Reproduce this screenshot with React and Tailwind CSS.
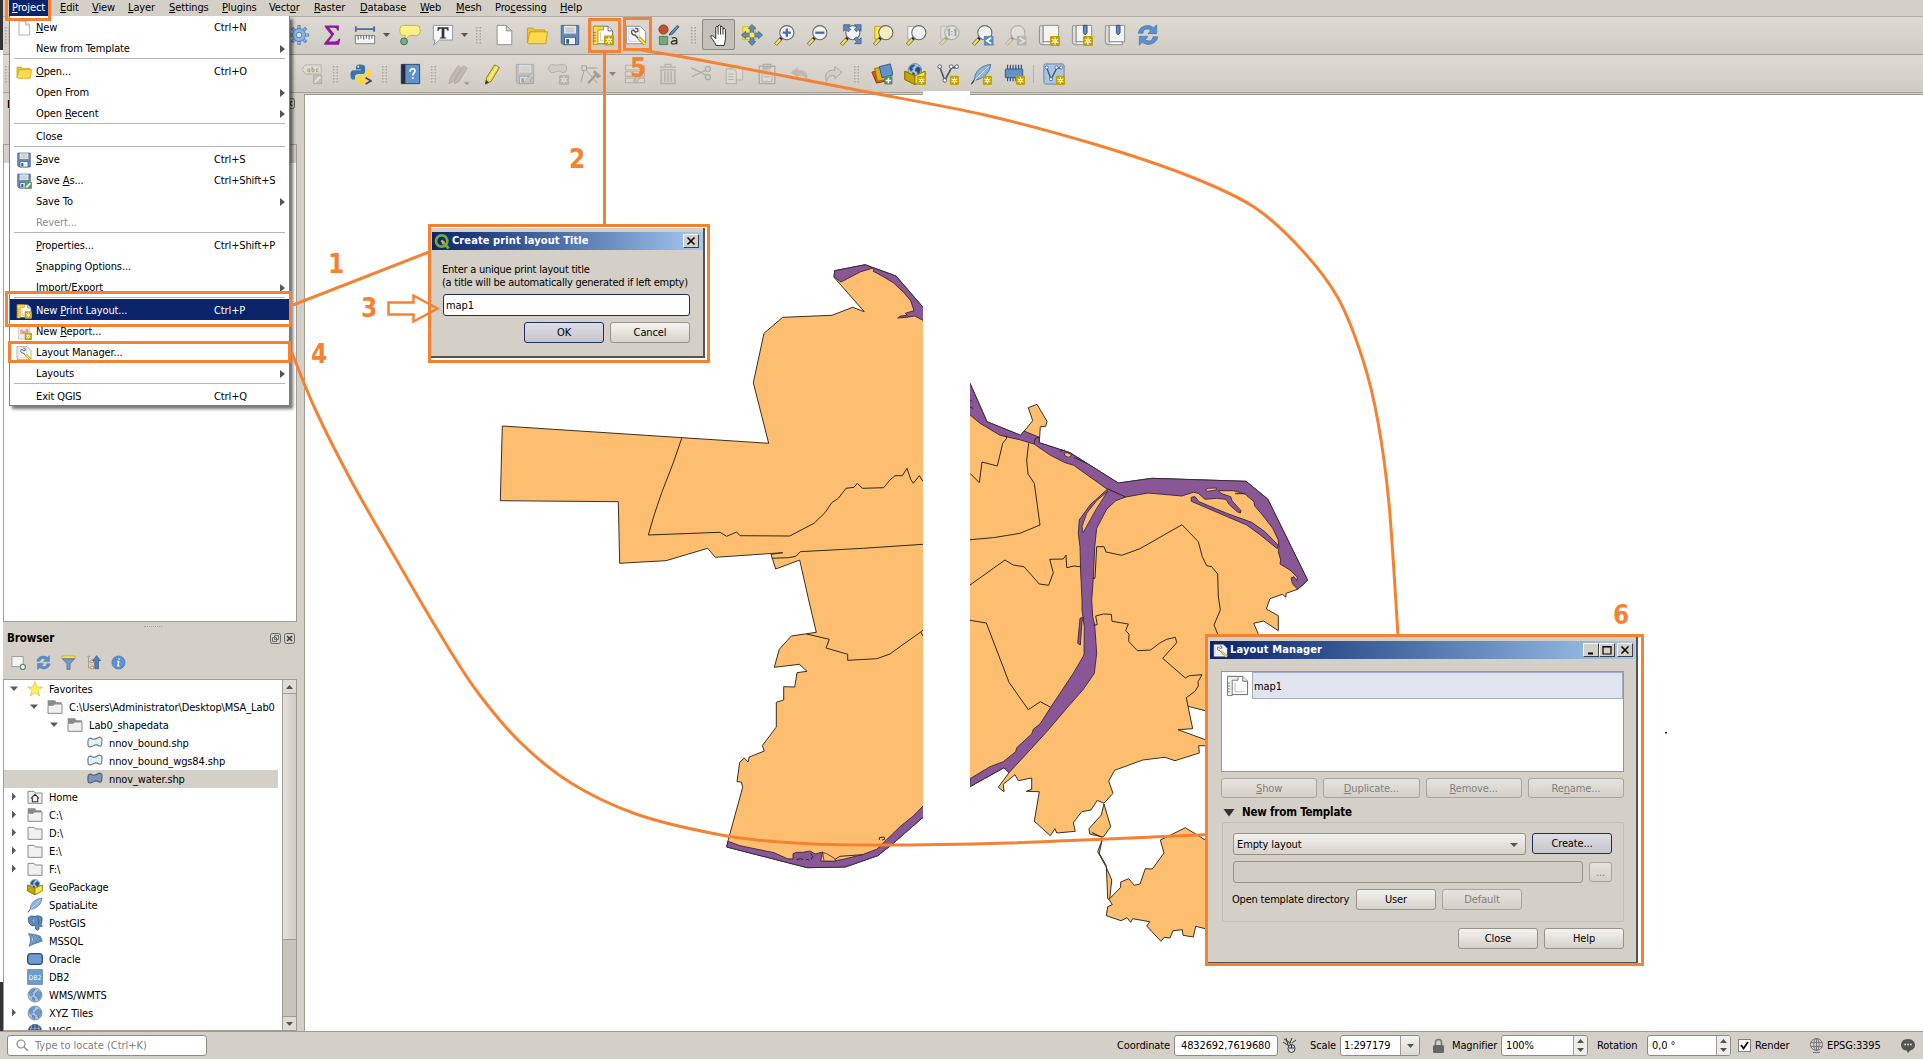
import React from "react";

/* ---------- helpers ---------- */

// Renders a label whose mnemonic letter is marked with "&".
function Mn({ t }) {
  const i = t.indexOf("&");
  if (i < 0) return <span>{t}</span>;
  return (
    <span>
      {t.slice(0, i)}
      <span className="underline underline-offset-1">{t[i + 1]}</span>
      {t.slice(i + 2)}
    </span>
  );
}

// Converts map-sheet points (one third of a pixel, from a sheet origin) to page points.
function P(ox, oy, s) {
  return s
    .trim()
    .split(/\s+/)
    .map((p) => {
      const [x, y] = p.split(",").map(Number);
      return (ox + x / 3).toFixed(1) + " " + (oy + y / 3).toFixed(1);
    })
    .join(" L");
}
const A = (s) => P(480, 250, s);
const B = (s) => P(700, 600, s);
const C = (s) => P(950, 360, s);
const D = (s) => P(950, 600, s);

// Smooth curve through a list of points.
function smooth(pts) {
  let d = `M${pts[0][0]} ${pts[0][1]}`;
  for (let i = 0; i < pts.length - 1; i++) {
    const p0 = pts[i - 1] || pts[i];
    const p1 = pts[i];
    const p2 = pts[i + 1];
    const p3 = pts[i + 2] || p2;
    d += ` C${p1[0] + (p2[0] - p0[0]) / 6} ${p1[1] + (p2[1] - p0[1]) / 6} ${p2[0] - (p3[0] - p1[0]) / 6} ${p2[1] - (p3[1] - p1[1]) / 6} ${p2[0]} ${p2[1]}`;
  }
  return d;
}

/* ---------- icons ---------- */

const Spark = ({ x = 13, y = 13, s = 11, c = "#c4a000" }) => (
  <g transform={`translate(${x} ${y}) scale(${s / 11})`}>
    <rect width="11" height="11" rx="1.500" fill={c} />
    <path d="M5.500 1.500v8M2 3.500l7 4M2 7.500l7-4" stroke="#fff" strokeWidth="1.200" />
    <circle cx="5.500" cy="5.500" r="1.900" fill="#fff" />
    <circle cx="5.500" cy="5.500" r=".8" fill={c} />
  </g>
);
const Lens = ({ cx = 14, cy = 9.5, fill = "#f2f2f2", stroke = "#6b6b6b" }) => (
  <g>
    <path d="M1.500 22.500L8 15.500" stroke="#555" strokeWidth="4" />
    <path d="M1.800 22.200L7 16.500" stroke="#fcd94f" strokeWidth="2.600" />
    <path d="M7 16.500L9.500 14" stroke="#222" strokeWidth="2.500" />
    <circle cx={cx} cy={cy} r="7.700" fill={fill} stroke={stroke} strokeWidth="1.200" />
  </g>
);
const Floppy = ({ c = "#5f8bbd" }) => (
  <g>
    <path d="M2.500 1.500h19v21h-17l-2-2z" fill={c} stroke="#44607f" />
    <rect x="5.500" y="2" width="13" height="8.500" fill="#e8e8e8" />
    <path d="M7 4.500h10M7 6.500h10M7 8.500h10" stroke="#b8b8b8" />
    <rect x="6" y="14.500" width="12" height="8" fill="#f2f2f2" stroke="#44607f" />
    <rect x="8" y="16.500" width="3" height="5" fill="#39597d" />
  </g>
);
const Folder = () => (
  <g fill="#fcd94f" stroke="#c4a000">
    <path d="M1.500 20.500V4.500h6l2 2h11v3" fill="#e8c33e" />
    <path d="M1.500 20.500l3-12h19l-2 13h-19z" />
  </g>
);
const Page = () => <path d="M4.500 1.500h10l6 6v15h-16zM14.500 1.500v6h6" fill="#fff" stroke="#8a8a8a" strokeLinejoin="round" />;
const LayoutPage = ({ grey }) => (
  <g>
    <path d="M2.500 2.500h15l5 5v14h-20z" fill="#fff" stroke="#666" />
    <path d="M17.500 2.500v5h5" fill="#eee" stroke="#666" />
    <path d="M1.500 2.500h11v4h-6v16h-5z" fill={grey ? "#eee" : "#fcd94f"} stroke={grey ? "#777" : "#b79100"} />
    <path d="M1.500 9.500h2.500M1.500 12.500h2.500M1.500 15.500h2.500M1.500 18.500h2.500" stroke={grey ? "#777" : "#8a6d00"} />
    <path d="M9.500 9v9.500h10" fill="none" stroke="#bbb" />
  </g>
);
const Wrench = () => (
  <g>
    <path d="M1.500 2.500h15l6 6v13h-21z" fill="#fff" stroke="#888" />
    <path d="M4 5h12v14H4z" fill="#f4f4f4" stroke="#c8d0e0" />
    <path d="M8 6.500c-2 2-.5 6 3 5.500l6 6M8.500 6l3 3 2.500-1c.5-2-1-3.500-3-3.500" fill="none" stroke="#555" strokeWidth="1.500" />
    <path d="M15 15l7 7" stroke="#c4a000" strokeWidth="4" />
    <path d="M15 15l7 7" stroke="#f6e08a" strokeWidth="1.800" />
  </g>
);
const Globe = ({ c = "#6f9bc9" }) => (
  <g>
    <circle cx="12" cy="12" r="10.500" fill="#a9c4e0" stroke="#4a74a5" />
    <path d="M4 7c3-3 5-4 8-3l-2 3-3 1 2 3-3 3c-2-2-3-4-2-7zM13 9l4-3 4 3-1 6-3 4-2-5-3-1zM8 15l4 2-1 4-3-2z" fill={c} stroke="#3f6590" strokeWidth=".7" />
  </g>
);
const Refresh = () => (
  <g fill="#5b91d0" stroke="#3a6ba8" strokeWidth=".7">
    <path d="M1.500 10C2 3 12-1 18 4l3.500-3v9.500H12l3-3.500C11 4 7 5.500 6.500 10z" />
    <path d="M22.500 14C22 21 12 25 6 20l-3.500 3v-9.500H12L9 17c4 3 8 1.500 8.500-3z" />
  </g>
);
const Book = () => (
  <g>
    <path d="M5.500 1.500h17v18h-17z" fill="#f4f4f4" stroke="#888" />
    <path d="M1.500 3.500q0-2 2-2t2 2v16q0 3 2 3h-3q-3 0-3-3z" fill="#dcdcdc" stroke="#888" />
    <path d="M6 22.500h14v-3H6" fill="#fff" stroke="#888" />
  </g>
);
const Marker = () => <path d="M13.500 1.500h4v8l-2 2.500-2-2.500z" fill="#5f8bbd" stroke="#2c4f78" />;
const Box3d = () => (
  <g>
    <path d="M1 9l11 5 11-5v9l-11 5.500L1 18z" fill="#fce94f" stroke="#8f7500" />
    <path d="M1 9l11 5v9.500L1 18z" fill="#c9a400" stroke="#8f7500" />
    <g transform="translate(3.500 -.5) scale(.7)"><Globe c="#2f4f73" /></g>
    <path d="M1 9l11 5v9.500L1 18z" fill="#c9a400" stroke="#8f7500" />
    <path d="M12 14l11-5v9l-11 5.500z" fill="#fce94f" stroke="#8f7500" />
  </g>
);
const Feather = () => (
  <g>
    <path d="M1.500 23L8 14" stroke="#345" strokeWidth="1.500" />
    <path d="M5 18C5 9 12 3 22.500 1.500 22 9 17 16 7 18.500z" fill="#8fb4dc" stroke="#4a74a5" />
    <path d="M5 19L20 4" stroke="#dce9f6" />
  </g>
);
const VShape = () => (
  <g fill="#fff" stroke="#4a5a6c">
    <path d="M3 4l5.500 15L16 5h5" fill="none" strokeWidth="1.800" />
    <circle cx="3" cy="4" r="2" /><circle cx="8.500" cy="19" r="2" /><circle cx="15.500" cy="4" r="2" /><circle cx="21.500" cy="4" r="2" />
  </g>
);
const Pencil = () => (
  <g>
    <path d="M6 16L15 2l5 3L11 20l-6 3z" fill="#f3d94a" stroke="#8a7414" />
    <path d="M9 17.500L17.500 4" stroke="#fff6b0" strokeWidth="1.500" />
    <path d="M4.500 23.500l1-5 3 2.500z" fill="#333" />
  </g>
);

const ICONS = {
  gear: (
    <g>
      <g stroke="#4f7fb8" strokeWidth="3.500">
        <path d="M12 1v22M1 12h22M4.200 4.200l15.600 15.600M19.800 4.200L4.200 19.800" />
      </g>
      <g stroke="#8db4e2" strokeWidth="2"><path d="M12 2v20M2 12h20M5 5l14 14M19 5L5 19" /></g>
      <circle cx="12" cy="12" r="7" fill="#8db4e2" stroke="#4f7fb8" />
      <circle cx="12" cy="12" r="3" fill="#dde8f5" stroke="#4f7fb8" />
    </g>
  ),
  sigma: <path d="M4 1.500h15.500v5.500h-1.800c-.5-2-1.500-2.800-3.700-2.800H9L14.500 11 8.500 19h6.500c2.500 0 3.500-1 4.300-3h1.700l-1.200 6.500H3.500v-1.500L11 12 4 3z" fill="#8e1a9a" />,
  ruler: (
    <g>
      <path d="M2 5.500h20M2 2.500v6M22 2.500v6" stroke="#44709f" strokeWidth="2" />
      <path d="M1.500 12.500h21v9h-21z" fill="#f4f4f4" stroke="#777" />
      <path d="M4.500 13v4M7.500 13v3M10.500 13v4M13.500 13v3M16.500 13v4M19.500 13v3" stroke="#555" />
    </g>
  ),
  tip: (
    <g>
      <path d="M5 1.500h14q4 0 4 4v3q0 4-4 4h-8l-5 6 1-6H5q-4 0-4-4v-3q0-4 4-4z" fill="#fdf08a" stroke="#c9b037" />
      <circle cx="5.500" cy="19" r="3.800" fill="#78a886" stroke="#3f6f50" />
    </g>
  ),
  text: (
    <g>
      <path d="M1.500 1.500h21v16H8L2 23l1.500-5.500h-2z" fill="#f5f8fc" stroke="#8296ad" />
      <path d="M6 3.500h12v4h-1c-.5-2-1-2.400-3.500-2.400v8.500c0 1 .5 1.200 2 1.300v1H8.500v-1c1.500-.1 2-.3 2-1.300V5.100C8 5.100 7.500 5.500 7 7.500H6z" fill="#333" />
    </g>
  ),
  page: <Page />,
  folder: <Folder />,
  save: <Floppy />,
  layout: <g><LayoutPage /><Spark x={13} y={12.5} s={11} /></g>,
  wrench: <Wrench />,
  style: (
    <g>
      <circle cx="6" cy="6" r="5" fill="#c0502f" stroke="#8e3418" />
      <path d="M13 10l8-8.500 2 1.500-7 8-4 1z" fill="#5f8bbd" stroke="#38587c" />
      <path d="M1.500 13.500h9v9h-9z" fill="#74a883" stroke="#4c7d5c" />
      <path d="M15 15.500c4-1.500 6 0 5.500 3v3.500M20.500 18c-4 0-6 .8-6 2.500s4 2.500 6-.5" fill="none" stroke="#333" strokeWidth="1.400" />
    </g>
  ),
  hand: <path transform="translate(1.500 0)" d="M7.500 23.500C6 19 1.500 15.500 1.500 13q1.500-1.500 3.500 1l2 2V3.500q1.200-2 2.500 0V2q1.300-2 2.700 0V3.500q1.300-1.700 2.600 0v2q1.400-1.500 2.700.5V16q-.5 4-1.500 7.500zM9.500 3.500v8M12.200 3.500v8M14.800 5v6.500" fill="#fff" stroke="#222" strokeLinejoin="round" />,
  pan: (
    <g>
      <path d="M2 3h14v14H2z" fill="#fce94f" stroke="#d4b800" />
      <path d="M12 .5l4 4.500h-2v5h5V8l4.500 4-4.500 4v-2h-5v5h2l-4 4.500L8 19h2v-5H5v2L.5 12 5 8v2h5V5H8z" fill="#5f8bbd" stroke="#38587c" strokeWidth=".8" />
      <path d="M9.500 9.500h5v5h-5z" fill="#fce94f" />
    </g>
  ),
  zoomIn: <g><Lens /><path d="M14 5v9M9.500 9.500h9" stroke="#3f6fa8" strokeWidth="2.500" /></g>,
  zoomOut: <g><Lens /><path d="M9 9.500h10" stroke="#3f6fa8" strokeWidth="2.500" /></g>,
  zoomFull: (
    <g>
      <Lens />
      <g fill="#5f8bbd" stroke="#38587c" strokeWidth=".8">
        <path d="M4 .8h7L8.800 3l3 3L9 8.500l-3-3L4 8zM23 .8h-7L18.200 3l-2.500 3L18 8.500l3-3L23 8zM23 21.500h-7l2.200-2.200-3-3L18 14l3 3 2-2z" />
      </g>
    </g>
  ),
  zoomSel: <g><path d="M2 2.500h14v14H2z" fill="#fce94f" stroke="#c4a000" /><Lens fill="#f4efc0" /></g>,
  zoomLayer: <g><path d="M2 2.500h14v14H2z" fill="#fff" stroke="#999" /><Lens /></g>,
  zoomOne: (
    <g opacity=".35">
      <path d="M2 2.500h14v14H2z" fill="#eee" stroke="#777" />
      <Lens />
      <path d="M9.500 7l1.500-1v7M14 8v.8M14 11v.8M16.500 7l1.500-1v7" stroke="#333" strokeWidth="1.700" fill="none" />
    </g>
  ),
  zoomLast: <g><Lens /><path d="M13 13h10.500v10.500H13z" fill="#5f8bbd" /><path d="M21 15l-5 3.200 5 3.200" fill="none" stroke="#fff" strokeWidth="1.800" /></g>,
  zoomNext: <g opacity=".35"><Lens /><path d="M13 13h10.500v10.500H13z" fill="#888" /><path d="M16 15l5 3.200-5 3.200" fill="none" stroke="#fff" strokeWidth="1.800" /></g>,
  book: <g><Book /><Spark /></g>,
  bookMark: <g><Book /><Marker /><Spark /></g>,
  bookOnly: <g><Book /><Marker /></g>,
  refresh: <Refresh />,
  abc: (
    <g opacity=".4">
      <path d="M1 7l4-5h17v10H5z" fill="#eee6c8" stroke="#777" />
      <path d="M7.500 6.500h2v3h-2zM12 4v5.500h2v-3h-2M19 6.500h-2v3h2" fill="none" stroke="#444" />
      <path d="M13.500 13.500h9v9h-9z" fill="#aaa" stroke="#777" /><path d="M15 21l6-6" stroke="#fff" strokeWidth="2" />
    </g>
  ),
  python: (
    <g>
      <path d="M11.500 1.500c-5 0-5 2-5 3v2.500h5.500v1H4c-3 0-3.500 3-3.500 5s.5 5 3 5h2v-3c0-2 1.500-3 3-3h5c1.500 0 3-1 3-2.500v-5c0-2-2-3-5-3z" fill="#3a75a8" />
      <path d="M12.500 22.500c5 0 5-2 5-3V17h-5.500v-1h8c2.500 0 3-2.500 3-4.500s-.5-4-3-4h-2v2.500c0 2-1.500 3-3 3h-5c-1.500 0-3 1-3 2.500v4c0 2 2 3 5.500 3z" fill="#ffd43b" />
      <circle cx="9" cy="4" r="1" fill="#fff" />
      <path d="M17 16l6 3.500-6 3.500" fill="none" stroke="#444" strokeWidth="1.800" />
    </g>
  ),
  help: (
    <g>
      <path d="M2.500 1.500h20v21h-20z" fill="#5f93cc" stroke="#2a4566" />
      <path d="M2.500 1.500h4.500v21H2.500z" fill="#222c3c" />
      <path d="M12 9.500c0-4.500 6-4 5.500-.5-.3 2-2.500 2.200-2.500 4.500M15 15.500v2" fill="none" stroke="#fff" strokeWidth="1.800" />
    </g>
  ),
  pencils: (
    <g opacity=".4" fill="#9c948c" stroke="#77706a">
      <path d="M2 17L11 3l4 2.500L6 20l-5 2.500zM8 17l9-14 4 2.500L12 20l-5 2.500z" />
      <path d="M18 21h5l-2.500 3z" fill="#333" />
    </g>
  ),
  pencil: <Pencil />,
  saveEdits: <g opacity=".35"><Floppy c="#999" /><path d="M12 20l7-9 3 2-7 9-4 1z" fill="#bbb" stroke="#666" /></g>,
  blob: (
    <g opacity=".4">
      <path d="M2 5q1-4 5-3 3 1 6 0 5-2 8 1 2 4-1 7-4 1-6-1-3-1-5 1-4 2-6-1-2-2-1-4z" fill="#c5c2bd" stroke="#77736d" />
      <Spark c="#8f8a80" />
    </g>
  ),
  vertex: (
    <g opacity=".4" stroke="#555" fill="none">
      <path d="M2 3h5v5H2zM7 5.500h12M4.500 8L1 21M7 8l12 14" />
      <path d="M9 22l8-9 3 3" strokeWidth="2.500" /><path d="M15 9l7 6" strokeWidth="3" />
    </g>
  ),
  table: (
    <g opacity=".4" stroke="#777">
      <path d="M1.500 2.500h21v5h-21zM1.500 9.500h21v5h-21zM1.500 16.500h21v5h-21z" fill="#e4dcc0" />
      <path d="M10 20l8-11 3 2-8 11z" fill="#aaa" />
    </g>
  ),
  trash: (
    <g opacity=".45" stroke="#8a8580" fill="none" strokeWidth="1.500">
      <path d="M3 4.500h18M9 4V1.500h6V4M4.500 7.500h15v15h-15zM8.500 9v12M12 9v12M15.500 9v12" />
    </g>
  ),
  cut: (
    <g opacity=".4" stroke="#777" fill="none" strokeWidth="1.500">
      <path d="M1 5l16 8M2 15l15-7" /><circle cx="19.500" cy="6.500" r="2.700" /><circle cx="19.500" cy="15.500" r="2.700" />
    </g>
  ),
  copy: (
    <g opacity=".4" stroke="#777" fill="#e6e3dc">
      <path d="M9.500 3.500h9l3 3v12h-12z" /><path d="M3.500 6.500h8l3 3v13h-11z" /><path d="M5.500 12h6M5.500 15h6M5.500 18h6" />
    </g>
  ),
  paste: (
    <g opacity=".4" stroke="#777" fill="#e6e3dc">
      <path d="M3.500 3.500h17v19h-17zM8 1.500h8v4H8z" strokeWidth="1.500" /><path d="M6.500 7.500h8l3 3v10h-11zM8.500 12h6M8.500 15h6" />
    </g>
  ),
  undo: <path d="M2 10l8-6v4c8-1 12 4 9 12-1-5-4-7-9-6v3z" fill="#a39d95" opacity=".5" />,
  redo: <path d="M22 10l-8-6v4C6 7 2 12 5 20c1-5 4-7 9-6v3z" fill="#d0ccc4" stroke="#888" opacity=".6" />,
  layers: (
    <g>
      <path d="M1 10l8-3 6 13-9 2z" fill="#d4541e" stroke="#8e3418" />
      <path d="M4 6l10-2 2 14-9 2z" fill="#e0b020" stroke="#8f7000" />
      <path d="M9 4l12-3 3 12-12 3z" fill="#5f93cc" stroke="#2f5580" />
      <rect x="14.500" y="14.500" width="9" height="9" rx="1.500" fill="#4f8f63" /><path d="M19 16v6M16 19h6" stroke="#fff" strokeWidth="1.600" />
    </g>
  ),
  box: <g><Box3d /><Spark x={14} y={14} s={10} /></g>,
  vnew: <g><VShape /><Spark x={14} y={14} s={10} /></g>,
  feather: <g><Feather /><Spark x={14} y={14} s={10} /></g>,
  chip: (
    <g>
      <path d="M5 2v18M8 2v18M11 2v18M14 2v18M17 2v18M20 2v18" stroke="#33517a" strokeWidth="1.300" />
      <rect x="2.500" y="6.500" width="19" height="9.500" rx="1" fill="#5f93cc" stroke="#2f5580" /><Spark x={14} y={14} s={10} />
    </g>
  ),
  vbox: (
    <g>
      <rect x="1" y="1" width="22" height="22" rx="2" fill="#a9c6e6" stroke="#5f7fa5" />
      <g transform="translate(1.500 1.500) scale(.85)"><VShape /></g><Spark x={14} y={14} s={10} />
    </g>
  ),
  report: (
    <g>
      <path d="M3.500 1.500h15l2 2v19h-17z" fill="#eee" stroke="#bbb" />
      <path d="M7 15V9h3v6M11 15v-4h3v4M15 15V8h3v7" fill="#e9b4a0" stroke="#d98f70" /><Spark />
    </g>
  ),
  saveAs: <g><Floppy /><rect x="13" y="13" width="11" height="11" rx="2" fill="#5f9c6f" /><path d="M15.500 21.500l6-6" stroke="#fff" strokeWidth="2.400" /></g>,
  star: <path d="M12 1l3 8h8l-6.500 5 2.500 8.500-7-5-7 5L7.500 14 1 9h8z" fill="#fdf15f" stroke="#d9b51c" />,
  dirOpen: <g><path d="M1 2h11l2 3h8v4H1z" fill="#8a8a88" /><path d="M1.500 9.500h8l2-2h11v14h-21z" fill="#f0f0f0" stroke="#8a8a88" strokeWidth="1.500" /></g>,
  dir: <path d="M1.500 3.500h9l2 2.500h10v15.500h-21z" fill="#f0f0f0" stroke="#8a8a88" strokeWidth="1.500" />,
  home: <g><path d="M1.500 3.500h9l2 2.500h10v15.500h-21z" fill="#f0f0f0" stroke="#8a8a88" strokeWidth="1.500" /><path d="M6 14l6-6 6 6M8 13v6h8v-6" fill="none" stroke="#333" strokeWidth="1.600" /></g>,
  poly: <path d="M1.500 8q1-5 6-2.500 4 2 8-1 5-3 7 1 0 4-.5 8 0 4-4 3-4-3-8-.5-5 3-8 1-1-4-.5-9z" fill="#e6eef6" stroke="#5f7690" strokeWidth="1.600" />,
  polySel: <path d="M1.500 8q1-5 6-2.500 4 2 8-1 5-3 7 1 0 4-.5 8 0 4-4 3-4-3-8-.5-5 3-8 1-1-4-.5-9z" fill="#7f95b8" stroke="#485c80" strokeWidth="1.600" />,
  gpkg: <Box3d />,
  spatialite: <Feather />,
  postgis: <path d="M2 4Q5 0 11 2q7-2 11 1 2 4-1 11l2 3h-5v4q-3 4-5 0l-1-6q-2 2-5 1Q1 12 2 4zM9 3q-3 6 1 11M15 3q4 3 2 12" fill="#5f8bbd" stroke="#2f5580" strokeWidth="1.200" />,
  mssql: <path d="M2 1q6 8 1 19l6-3 14-5-3-7q-8-4-18-4zM8 3q3 7 0 14M13 3q3 6 1 12M18 4q2 5 1 9" fill="#6f9bc9" stroke="#3a628f" />,
  oracle: <rect x="1" y="4" width="22" height="16" rx="5" fill="#6f9bd0" stroke="#2b4d7a" strokeWidth="2" />,
  globe: <Globe />,
  wcs: <g><circle cx="12" cy="12" r="10.500" fill="#345a86" /><path d="M4 8h16M12 2v20M7 3q-3 8 0 18M17 3q3 8 0 18" stroke="#a9c4e0" fill="none" /></g>,
  addLayer: <g><path d="M1.500 2.500h18v16h-18z" fill="#f4f4f4" stroke="#777" /><circle cx="19" cy="19" r="4" fill="#fff" stroke="#4f8f63" strokeWidth="2" /></g>,
  filter: <g><path d="M1.500 1.500h21v4h-21z" fill="#fce94f" stroke="#b79c1c" /><path d="M2 6h20l-7.500 8v9h-5v-9z" fill="#6f9bc9" stroke="#3f6590" /></g>,
  collapse: <g><path d="M2 2h5M4 2v19h4M4 11h4" stroke="#888" fill="none" /><path d="M8 8h4v4H8zM8 18h4v4H8z" fill="#fff" stroke="#e08a2e" strokeWidth="1.500" /><path d="M17 1l6.500 8H20v13h-6V9h-3.500z" fill="#4f7fb8" stroke="#2f5580" /></g>,
  info: <g><circle cx="12" cy="12" r="10.500" fill="#5f93d0" stroke="#3f6ea8" /><path d="M13 5.500v2.500M10 10.500h2.500l-1.500 7h2.500" stroke="#fff" strokeWidth="2" fill="none" /></g>,
  map: <LayoutPage grey />,
  qgis: <g><circle cx="11.500" cy="12" r="8.500" fill="none" stroke="#6fae3c" strokeWidth="4" /><path d="M13 14l9 9" stroke="#6fae3c" strokeWidth="4.500" /><path d="M11 11l4 4" stroke="#ee9a53" strokeWidth="4" /></g>,
};

function Icon({ n, s = 22 }) {
  return (
    <svg width={s} height={s} viewBox="0 0 24 24" fill="none" className="block shrink-0">
      {n === "db2" ? (
        <g>
          <rect x="0" y="0" width="24" height="24" rx="2" fill="#6f9bc9" />
          <text x="12" y="16" textAnchor="middle" fontSize="10" fill="#fff">DB2</text>
        </g>
      ) : (
        ICONS[n]
      )}
    </svg>
  );
}

/* ---------- tool bars ---------- */

const Handle = ({ w }) => (
  <div className={"flex justify-center " + w}>
    <svg width="6" height="18" className="block">
      {[1, 4, 7, 10, 13, 16].map((y) => (
        <g key={y}>
          <rect x="0" y={y} width="1.500" height="1.500" fill="#aaa59c" />
          <rect x="3.500" y={y} width="1.500" height="1.500" fill="#aaa59c" />
        </g>
      ))}
    </svg>
  </div>
);
const Drop = ({ c = "#555" }) => (
  <div className="flex w-[11px] justify-center">
    <svg width="7" height="4"><path d="M0 0h7L3.500 4z" fill={c} /></svg>
  </div>
);
const Tool = ({ n, on }) => (
  <div className={"flex h-[31px] w-[33px] shrink-0 items-center justify-center " + (on ? "rounded-[2px] border border-[#8d8981] bg-[#c4c0b9]" : "")}>
    <Icon n={n} />
  </div>
);

function Toolbars() {
  return (
    <div className="flex flex-col">
      <div className="flex h-[39px] items-center border-y border-t-[#b1ada5] border-b-[#9f9b93] bg-gradient-to-b from-[#dedad3] to-[#d0ccc4] pb-[2px]">
        <Handle w="w-[10px]" />
        <div className="w-[269px]" />
        <Tool n="gear" /><Tool n="sigma" /><Tool n="ruler" /><Drop /><div className="w-px" />
        <Tool n="tip" /><Tool n="text" /><Drop />
        <Handle w="w-[17px]" />
        <Tool n="page" /><Tool n="folder" /><Tool n="save" /><Tool n="layout" /><Tool n="wrench" /><Tool n="style" />
        <Handle w="w-[17px]" />
        <Tool n="hand" on />
        {["pan", "zoomIn", "zoomOut", "zoomFull", "zoomSel", "zoomLayer", "zoomOne", "zoomLast", "zoomNext", "book", "bookMark", "bookOnly", "refresh"].map((n) => (
          <Tool key={n} n={n} />
        ))}
      </div>
      <div className="flex h-[38px] items-center border-b border-[#a5a199] bg-gradient-to-b from-[#dedad3] to-[#d0ccc4]">
        <Handle w="w-[10px]" />
        <div className="w-[282px]" />
        <Tool n="abc" /><Handle w="w-[16px]" /><Tool n="python" /><Handle w="w-[16px]" /><Tool n="help" /><Handle w="w-[16px]" />
        <Tool n="pencils" /><Tool n="pencil" /><Tool n="saveEdits" /><Tool n="blob" /><Tool n="vertex" /><Drop c="#8a857d" />
        {["table", "trash", "cut", "copy", "paste", "undo", "redo"].map((n) => <Tool key={n} n={n} />)}
        <Handle w="w-[16px]" />
        {["layers", "box", "vnew", "feather", "chip"].map((n) => <Tool key={n} n={n} />)}
        <div className="mx-[3px] h-[18px] w-px bg-[#b5b1a9]" />
        <Tool n="vbox" />
      </div>
    </div>
  );
}

/* ---------- left dock ---------- */

const DockBtns = () => (
  <div className="flex gap-[3px]">
    <svg width="11" height="11" viewBox="0 0 11 11" fill="none" stroke="#666">
      <rect x=".5" y=".5" width="10" height="10" rx="2" /><path d="M4.500 2.500h4v4h-4zM2.500 4.500h4v4h-4z" strokeWidth=".9" />
    </svg>
    <svg width="11" height="11" viewBox="0 0 11 11" fill="none" stroke="#666">
      <rect x=".5" y=".5" width="10" height="10" rx="2" /><path d="M3 3l5 5M8 3l-5 5" stroke="#444" strokeWidth="1.700" />
    </svg>
  </div>
);

const TREE = [
  [0, "o", "star", "Favorites"],
  [1, "o", "dirOpen", "C:\\Users\\Administrator\\Desktop\\MSA_Lab0"],
  [2, "o", "dirOpen", "Lab0_shapedata"],
  [3, "", "poly", "nnov_bound.shp"],
  [3, "", "poly", "nnov_bound_wgs84.shp"],
  [3, "", "polySel", "nnov_water.shp"],
  [0, "c", "home", "Home"],
  [0, "c", "dirOpen", "C:\\"],
  [0, "c", "dir", "D:\\"],
  [0, "c", "dir", "E:\\"],
  [0, "c", "dir", "F:\\"],
  [0, "", "gpkg", "GeoPackage"],
  [0, "", "spatialite", "SpatiaLite"],
  [0, "", "postgis", "PostGIS"],
  [0, "", "mssql", "MSSQL"],
  [0, "", "oracle", "Oracle"],
  [0, "", "db2", "DB2"],
  [0, "", "globe", "WMS/WMTS"],
  [0, "c", "globe", "XYZ Tiles"],
  [0, "", "wcs", "WCS"],
];
const INDENT = ["pl-[4px]", "pl-[24px]", "pl-[44px]", "pl-[64px]"];

function TreeArrow({ k }) {
  return (
    <svg width="12" height="10" viewBox="0 0 12 10" className="block shrink-0">
      {k === "o" && <path d="M2 2.500h8L6 7z" fill="#5a5a5a" />}
      {k === "c" && <path d="M4 .5v8L8 4.500z" fill="#5a5a5a" />}
    </svg>
  );
}

function Dock() {
  return (
    <div className="flex w-[300px] shrink-0 flex-col">
      <div className="flex h-[51px] items-start justify-between pl-[4px] pr-[8px] pt-[5px]">
        <span className="text-[11px] font-bold leading-[13px]">Layers</span>
        <DockBtns />
      </div>
      <div className="flex h-[478px] w-[294px] flex-col border border-[#a09c94] bg-white">
        <div className="h-[18px] bg-[#d5d1c9]" />
      </div>
      <div className="flex h-[8px] items-center justify-center">
        <div className="h-px w-[18px] border-t border-dotted border-[#a8a49b]" />
      </div>
      <div className="flex h-[16px] items-center justify-between pl-[4px] pr-[8px]">
        <span className="text-[11.500px] font-bold tracking-[-0.1px]">Browser</span>
        <DockBtns />
      </div>
      <div className="flex h-[33px] items-center gap-[10px] pl-[8px]">
        {["addLayer", "refresh", "filter", "collapse", "info"].map((n) => <Icon key={n} n={n} s={15} />)}
      </div>
      <div className="flex h-[352px] w-[294px] border border-[#a09c94] bg-white">
        <div className="flex grow flex-col overflow-hidden">
          {TREE.map(([lvl, arrow, icon, label], i) => (
            <div key={i} className={"mr-[4px] flex h-[18px] shrink-0 items-center whitespace-nowrap " + INDENT[lvl] + (i === 5 ? " bg-[#d4d0c8]" : "")}>
              <TreeArrow k={arrow} />
              <div className="ml-[7px] mr-[6px]"><Icon n={icon} s={16} /></div>
              <span className="pt-px">{label}</span>
            </div>
          ))}
        </div>
        <div className="flex w-[14px] shrink-0 flex-col border-l border-[#a09c94] bg-[#c8c4bc]">
          <div className="flex h-[14px] items-center justify-center border-b border-[#a09c94] bg-[#dedad4]">
            <svg width="7" height="4"><path d="M0 4h7L3.500 0z" fill="#555" /></svg>
          </div>
          <div className="h-[246px] border-b border-[#a09c94] bg-gradient-to-r from-[#e4e1db] to-[#d0ccc4]" />
          <div className="grow" />
          <div className="flex h-[14px] items-center justify-center border-t border-[#a09c94] bg-[#dedad4]">
            <svg width="7" height="4"><path d="M0 0h7L3.500 4z" fill="#555" /></svg>
          </div>
        </div>
      </div>
    </div>
  );
}

/* ---------- map ---------- */

const LAND = [
  "M" + A("1329,172 1248,78 1156,44 1064,62 1062,82 1153,185 1118,172 1056,196 908,202 852,250 820,398 866,580 67,528 61,752 415,755 419,940 558,932 683,895 706,922 908,908 873,913 887,957 959,930 986,1050 1009,1147") +
    " L" + B("274,108 238,148 223,202 298,193 321,214 291,218 284,261 251,260 251,300 229,307 229,381 187,437 193,453 148,471 144,486 133,474 119,487 111,545 124,546 128,562 84,722 80,741 322,803 436,801 533,767 574,735 669,652"),
  "M" + C("60,70 111,185 212,226 248,182 235,143 261,133 291,184 287,199 271,200 268,248 360,278 505,369 606,355 888,364 953,417 1073,661 1043,688 1008,700 1008,712 997,703 960,716 949,747 985,767 985,812 941,783 911,790 924,820 924,1000") +
    " L" + D("924,332 766,332 714,319 728,386 684,389 766,419 800,437 746,437 748,459 675,482 645,472 578,480 494,511 476,543 489,580 462,610 442,601 423,630 395,635 370,668 376,694 320,699 315,686 301,707 253,664 268,575 229,574 245,568 245,534 205,542 195,524 160,553 162,575 145,562 177,518 162,503 60,560"),
  "M" + D("462,612 482,680 460,711 435,706 419,702 417,686 454,645") + "Z",
  "M" + D("456,721 443,755 468,800 485,840 479,900 473,896 469,797 448,760") + "Z",
  "M" + D("800,730 766,720 706,683 662,705 631,720 642,759 607,807 586,806 570,852 553,856 536,836 512,846 512,862 477,898 487,914 473,920 469,947 513,962 531,953 542,967 548,956 599,965 590,978 633,1024 643,1012 660,1014 669,992 697,989 699,1006 730,1011 737,979 766,986 800,990"),
];
const WATER = [
  "M" + A("1064,62 1156,44 1180,54 1142,65 1110,82 1083,96 1062,80") + "Z",
  "M" + A("1329,172 1248,78 1182,54 1180,64 1210,80 1240,98 1270,126 1292,152 1302,182 1276,190 1282,196 1262,198 1253,204 1280,202 1304,198 1329,211"),
  "M" + B("669,618 640,648 600,680 553,726 530,748 487,764 430,778 400,783 362,783 368,756 346,762 330,753 308,757 290,757 279,761 279,777 262,776 222,758 120,737 84,724 80,741 322,803 436,801 533,767 574,735 669,652"),
  "M" + C("60,70 111,185 212,226 222,213 268,232 268,248 360,278 505,369 606,355 888,364 953,417 1073,661 1043,688 1028,672 1023,654 1032,650 1040,662 1042,652 1020,630 990,612 992,600 985,575 987,560 984,538 968,505 935,462 914,438 912,425 885,402 850,392 806,392 812,400 842,410 846,422 873,452 871,459 862,455 838,434 828,418 800,415 765,418 745,400 730,397 695,408 594,399 527,411 497,422 470,448 440,505 434,560 430,655 425,720 428,770") +
    " L" + D("434,75 440,160 433,220 400,268 350,325 290,395 240,450 177,518 162,503 60,560"),
  "M" + C("724,412 735,410 747,425 830,460 905,487 945,515 985,556 982,566 930,524 890,495 724,424") + "Z",
  "M" + C("400,772 390,775 383,850 391,855 396,785") + "Z",
];
const WATER_BACK =
  D("60,536 120,500 160,485 197,455 200,443 245,402 250,388 270,372 302,322 330,280 370,220 402,165 403,80 396,30") +
  " L" + C("396,720 392,640 390,560 385,520 388,480 420,435 472,388 371,316 345,308 300,285 252,252 212,240 150,226 90,190 60,165");
const ISLES = [
  "M" + C("473,394 440,445 412,495 400,518 396,500 410,460 440,422") + "Z",
  "M" + C("765,390 775,385 800,384 798,390 772,394") + "Z",
  "M" + C("342,280 352,278 366,285 356,292 346,288") + "Z",
  "M" + B("368,757 380,761 402,774 408,783 372,783") + "Z",
];
const BORDERS = [
  A("605,565 580,638 545,728 524,790 505,855 720,847 740,859 770,846 780,857 929,858 1002,820 1035,788 1055,758 1075,745 1098,715 1122,712 1132,700 1147,715 1211,713 1228,692 1245,677 1267,677 1281,655 1292,688 1300,700 1318,677 1329,694"),
  A("875,925 925,923 948,919 961,905 1150,895 1329,883"),
  B("320,102 388,118 378,144 443,163 443,181 530,176 570,162 600,140 662,96 669,90"),
  B("662,96 669,108"),
  C("60,340 88,368 96,306 142,318 158,250 170,235 168,226"),
  C("236,250 230,300 234,342 253,370 270,495 210,520 130,533 60,539"),
  C("60,675 165,600 190,615 222,620 268,672 296,676 310,638 299,598 340,597 348,585 350,623 372,618 390,620"),
  C("428,655 435,655 440,560 462,560 468,576 515,586 570,566 696,494 745,545 757,590 770,617 785,620 803,642 805,708 811,750 792,795 803,822"),
  C("472,386 527,411"),
  C("268,232 256,235 252,252"),
  C("855,401 884,401"),
  D("60,61 109,69 177,247 235,329 271,305 302,322"),
  D("430,76 442,74 437,48 460,42 484,43 486,64 535,72 527,92 537,102 536,124 562,152 602,150 628,130 650,118 676,112 680,128 638,175 706,234 718,227 756,224 744,245 745,258 735,274 709,293 714,319"),
  D("425,697 455,712"),
  B("405,778 420,769 487,764"),
  B("538,720 538,713 552,711 554,718 546,720"),
];
const WATER_DETAIL = [
  B("290,779 302,776 310,779"),
  B("318,778 328,780"),
  B("332,760 338,770 334,778"),
  C("60,120 66,124"),
  C("60,140 70,146"),
  C("330,274 345,270"),
  C("372,292 384,298 410,310"),
];

function MapCanvas() {
  return (
    <div className="mt-px h-[937px] grow border-l border-t border-[#a09c94] bg-white">
      <svg width="1618" height="935" viewBox="305 95 1618 935" className="block" strokeLinejoin="round">
        <g fill="#fdbf6f" stroke="#3a2f22" strokeWidth="1">
          {LAND.map((d, i) => <path key={i} d={d} />)}
        </g>
        <g fill="#8a5796" stroke="#35263a" strokeWidth=".9">
          {WATER.map((d, i) => <path key={i} d={i === 3 ? d + "L" + WATER_BACK : d} />)}
        </g>
        <g fill="#fdbf6f" stroke="#35263a" strokeWidth=".8">
          {ISLES.map((d, i) => <path key={i} d={d} />)}
        </g>
        <g fill="none" stroke="#2e281e" strokeWidth="1">
          {BORDERS.map((d, i) => <path key={i} d={"M" + d} />)}
          {WATER_DETAIL.map((d, i) => <path key={i} d={"M" + d} />)}
        </g>
        <rect x="923" y="95" width="47" height="935" fill="#fff" />
        <rect x="1665" y="732" width="2" height="1.500" fill="#222" />
      </svg>
    </div>
  );
}

/* ---------- status bar ---------- */

const Spin = () => (
  <div className="flex w-[14px] flex-col items-center justify-center gap-[5px] border-l border-[#a09c94] bg-[#efede9]">
    <svg width="7" height="4"><path d="M0 4h7L3.500 0z" fill="#555" /></svg>
    <svg width="7" height="4"><path d="M0 0h7L3.500 4z" fill="#555" /></svg>
  </div>
);
const FIELD = "flex h-[21px] shrink-0 overflow-hidden rounded-[3px] border border-[#8f8b84] bg-white ";

function StatusBar() {
  return (
    <div className="flex h-[28px] items-center whitespace-nowrap border-t border-[#a09c94] bg-[#d4d0c8] pl-[7px]">
      <div className={FIELD + "w-[200px] items-center pl-[8px] text-[#808080]"}>
        <svg width="13" height="13" viewBox="0 0 13 13" fill="none" stroke="#888" strokeWidth="1.200"><circle cx="5" cy="5" r="4" /><path d="M8 8l4 4" /></svg>
        <span className="ml-[6px] tracking-[-0.020px]">Type to locate (Ctrl+K)</span>
      </div>
      <span className="ml-[910px] w-[57px]">Coordinate</span>
      <div className={FIELD + "w-[104px] items-center pl-[6px]"}>4832692,7619680</div>
      <svg width="15" height="17" viewBox="0 0 15 17" className="ml-[4px]" fill="none" stroke="#333">
        <path d="M2 2l5 3 5 8M1 5l6 4M4 1l2 7M10 1l-2 5M14 3l-4 3" /><ellipse cx="9.500" cy="11.500" rx="3.500" ry="4" fill="#ddd" /><path d="M7 11h5M9.500 8v3" />
      </svg>
      <span className="ml-[13px] w-[30px]">Scale</span>
      <div className={FIELD + "w-[80px]"}>
        <span className="grow self-center pl-[3px]">1:297179</span>
        <div className="flex w-[19px] items-center justify-center border-l border-[#a09c94] bg-gradient-to-b from-[#f4f3f0] to-[#dcd8d1]">
          <svg width="7" height="4"><path d="M0 0h7L3.500 4z" fill="#555" /></svg>
        </div>
      </div>
      <svg width="13" height="16" viewBox="0 0 13 16" className="ml-[12px]"><path d="M3.500 7V4.500a3 3 0 0 1 6 0V7" fill="none" stroke="#777" strokeWidth="1.500" /><rect x="1" y="7" width="11" height="8" rx="1.500" fill="#666" /></svg>
      <span className="ml-[7px] w-[49px]">Magnifier</span>
      <div className={FIELD + "w-[87px]"}><span className="grow self-center pl-[4px]">100%</span><Spin /></div>
      <span className="ml-[9px] w-[50px]">Rotation</span>
      <div className={FIELD + "w-[84px]"}><span className="grow self-center pl-[4px]">0,0 °</span><Spin /></div>
      <div className="ml-[7px] flex h-[13px] w-[13px] items-center justify-center border border-[#808080] bg-white">
        <svg width="9" height="9" viewBox="0 0 9 9"><path d="M1 4l2.500 3.500L8 1" fill="none" stroke="#111" strokeWidth="1.800" /></svg>
      </div>
      <span className="ml-[4px] w-[54px]">Render</span>
      <svg width="15" height="15" viewBox="0 0 15 15" fill="none" stroke="#777"><circle cx="7.500" cy="6.500" r="6" /><ellipse cx="7.500" cy="6.500" rx="2.700" ry="6" /><path d="M1.500 4.500h12M1.500 8.500h12M7.500 1v12M4 14.500h7" /></svg>
      <span className="ml-[3px] w-[73px]">EPSG:3395</span>
      <svg width="16" height="16" viewBox="0 0 16 16"><path d="M8 1c9 0 9 11 2 11.500L8 15l-1.500-2.500C-1 12-1 1 8 1z" fill="#555" /><path d="M4.500 6.500h1.500M7.300 6.500h1.500M10.100 6.500h1.500" stroke="#fff" strokeWidth="1.500" /></svg>
    </div>
  );
}

/* ---------- project menu ---------- */

const MENU = [
  ["page", "&New", "Ctrl+N"],
  ["", "New from Template", ">"],
  null,
  ["folder", "&Open...", "Ctrl+O"],
  ["", "Open From", ">"],
  ["", "Open &Recent", ">"],
  null,
  ["", "Close", ""],
  null,
  ["save", "&Save", "Ctrl+S"],
  ["saveAs", "Save &As...", "Ctrl+Shift+S"],
  ["", "Save To", ">"],
  ["", "Revert...", ""],
  null,
  ["", "&Properties...", "Ctrl+Shift+P"],
  ["", "&Snapping Options...", ""],
  ["", "Import/Export", ">"],
  null,
  ["layout", "New &Print Layout...", "Ctrl+P"],
  ["report", "New &Report...", ""],
  ["wrench", "Layout Manager...", ""],
  ["", "Layouts", ">"],
  null,
  ["", "Exit QGIS", "Ctrl+Q"],
];

function ProjectMenu() {
  return (
    <div className="absolute left-[9px] top-[16px] flex h-[390px] w-[281px] flex-col border border-t-0 border-[#808080] bg-white shadow-[3px_3px_3px_rgba(0,0,0,0.550)]">
      {MENU.map((m, i) => {
        if (!m) return <div key={i} className="flex h-[2px] shrink-0 px-[4px]"><div className="h-px grow bg-[#b4b4b4]" /></div>;
        const on = m[1].includes("Print");
        const tone = on ? " bg-[#0a246a] text-white" : m[1] === "Revert..." ? " text-[#8c8c8c]" : "";
        return (
          <div key={i} className={"flex h-[21px] shrink-0 items-center whitespace-nowrap pl-[6px] pt-[2px]" + tone}>
            <div className="w-[20px]">{m[0] && <Icon n={m[0]} s={16} />}</div>
            <div className="w-[178px]"><Mn t={m[1]} /></div>
            {m[2] === ">" ? (
              <div className="flex grow justify-end pr-[4px]"><svg width="5" height="8"><path d="M0 0v8L5 4z" fill="#555" /></svg></div>
            ) : (
              <span>{m[2]}</span>
            )}
          </div>
        );
      })}
    </div>
  );
}

/* ---------- dialogs ---------- */

const BTN = "flex shrink-0 items-center justify-center rounded-[3px] border pt-px ";
const NORMAL = "border-[#97938b] bg-gradient-to-b from-[#f5f3ef] to-[#d6d2ca] ";
const OFF = "border-[#a9a59d] bg-gradient-to-b from-[#e6e3de] to-[#d4d0c8] text-[#808080] ";
const DEF = "border-[#1b2f62] bg-gradient-to-b from-[#dddde3] to-[#c6c5cb] ";

function WinBtn({ k, last }) {
  return (
    <div className={"flex h-[14px] w-[16px] items-center justify-center border border-b-[#404040] border-l-white border-r-[#404040] border-t-white bg-[#d4d0c8] " + (last ? "ml-[2px]" : "")}>
      <svg width="10" height="10" viewBox="0 0 10 10" fill="none" stroke="#000">
        {k === "x" && <path d="M1.500 1.500l7 7M8.500 1.500l-7 7" strokeWidth="1.600" />}
        {k === "m" && <path d="M2 8.500h5" strokeWidth="2" />}
        {k === "o" && <path d="M1 1.500h8v7.500H1zM1 2h8" strokeWidth="1.200" />}
      </svg>
    </div>
  );
}

function TitleDialog() {
  return (
    <div className="absolute left-[428px] top-[224px] h-[139px] w-[282px] border-[3px] border-[#f58233] bg-white pb-[2px] pr-[2px] pt-px">
      <div className="flex h-full flex-col border-b-2 border-r-2 border-[#56534f] bg-[#d4d0c8] pt-[4px]">
        <div className="ml-px flex h-[18px] items-center bg-gradient-to-r from-[#0a246a] to-[#a6caf0] pl-[2px] pr-[4px]">
          <Icon n="qgis" s={16} />
          <span className="ml-[2px] grow whitespace-nowrap text-[11px] font-bold tracking-[0.100px] text-white">Create print layout Title</span>
          <WinBtn k="x" />
        </div>
        <div className="mt-[13px] flex flex-col pl-[11px] leading-[13px] tracking-[-0.250px]">
          <span>Enter a unique print layout title</span>
          <span className="whitespace-nowrap">(a title will be automatically generated if left empty)</span>
        </div>
        <div className="ml-[12px] mt-[5px] flex h-[22px] w-[247px] items-center rounded-[3px] border border-[#1b2f62] bg-white pl-[2px] pt-[2px]">map1</div>
        <div className="mt-[6px] flex gap-[6px] pl-[93px]">
          <div className={BTN + DEF + "h-[21px] w-[80px]"}>OK</div>
          <div className={BTN + NORMAL + "h-[21px] w-[80px]"}>Cancel</div>
        </div>
      </div>
    </div>
  );
}

function LayoutManager() {
  return (
    <div className="absolute left-[1205px] top-[634px] h-[332px] w-[439px] border-[3px] border-[#f58233] bg-white pr-[3px]">
      <div className="flex h-full flex-col border-b border-r-2 border-[#56534f] bg-[#d4d0c8] pt-[4px]">
        <div className="ml-[2px] mr-px flex h-[18px] items-center bg-gradient-to-r from-[#0a246a] to-[#a6caf0] pl-[3px] pr-[2px]">
          <Icon n="wrench" s={15} />
          <span className="ml-[2px] grow text-[11px] font-bold tracking-[0.150px] text-white">Layout Manager</span>
          <WinBtn k="m" /><WinBtn k="o" /><WinBtn k="x" last />
        </div>
        <div className="ml-[13px] mt-[12px] flex h-[101px] w-[403px] items-start border border-[#9a968e] bg-white">
          <div className="flex h-[26px] w-[30px] items-center justify-center"><Icon n="map" s={23} /></div>
          <div className="flex h-[27px] grow items-center border border-[#a3acc0] bg-[#e0e4ef] pl-px pt-[2px]">map1</div>
        </div>
        <div className="ml-[13px] mt-[6px] flex w-[403px] gap-[6px]">
          {["&Show", "&Duplicate...", "&Remove...", "Re&name..."].map((t) => (
            <div key={t} className={BTN + OFF + "h-[20px] flex-1"}><Mn t={t} /></div>
          ))}
        </div>
        <div className="ml-[15px] mt-[7px] flex h-[14px] items-center">
          <svg width="12" height="9"><path d="M.5 1h11L6 8.500z" fill="#333" /></svg>
          <span className="ml-[7px] text-[11.500px] font-bold tracking-[-0.200px]">New from Template</span>
        </div>
        <div className="ml-[14px] mt-[3px] flex h-[100px] w-[402px] flex-col rounded-[2px] border border-[#c1bdb5] pl-[10px] pt-[10px]">
          <div className="flex gap-[6px]">
            <div className={BTN + NORMAL + "h-[22px] w-[293px] !justify-between pl-[3px] pr-[7px] pt-[2px]"}>
              <span>Empty layout</span><svg width="8" height="4"><path d="M0 0h8L4 4z" fill="#555" /></svg>
            </div>
            <div className={BTN + DEF + "h-[21px] w-[80px]"}>Create...</div>
          </div>
          <div className="mt-[6px] flex gap-[6px]">
            <div className="h-[22px] w-[350px] rounded-[3px] border border-[#97938b] bg-[#d1cdc5]" />
            <div className={BTN + OFF + "mt-px h-[20px] w-[23px]"}>...</div>
          </div>
          <div className="mt-[6px] flex items-center">
            <span className="-ml-px w-[124px] whitespace-nowrap tracking-[-0.200px]">Open template directory</span>
            <div className={BTN + NORMAL + "h-[21px] w-[80px]"}>User</div>
            <div className={BTN + OFF + "ml-[6px] h-[21px] w-[80px]"}>Default</div>
          </div>
        </div>
        <div className="ml-[250px] mt-[6px] flex gap-[6px]">
          <div className={BTN + NORMAL + "h-[21px] w-[80px]"}>Close</div>
          <div className={BTN + NORMAL + "h-[21px] w-[80px]"}>Help</div>
        </div>
      </div>
    </div>
  );
}

/* ---------- callouts ---------- */

const CURVE_TOP = [[642, 49], [647, 51], [700, 60], [862, 91], [985, 115], [1094, 144], [1189, 176], [1254, 207], [1301, 249], [1338, 298], [1363, 360], [1378, 422], [1389, 504], [1398, 635]];
const CURVE_LOW = [[292, 353], [316, 411], [353, 484], [396, 559], [440, 634], [476, 690], [520, 742], [571, 783], [636, 814], [716, 834], [780, 842], [861, 845], [1007, 843], [1208, 834.5]];
const NUMS = [["1", 328, 273], ["2", 569, 168], ["3", 361, 317], ["4", 311, 363], ["5", 630, 77], ["6", 1613, 624]];

function Callouts() {
  return (
    <svg width="1923" height="1059" className="pointer-events-none absolute left-0 top-0" fill="none" stroke="#f58233" strokeWidth="3">
      <rect x="6.500" y="-1.500" width="43" height="21" />
      <rect x="6.500" y="292.500" width="284" height="33" />
      <rect x="9.500" y="342.500" width="280" height="19" />
      <rect x="589.500" y="19.500" width="30" height="32" />
      <rect x="624.500" y="18.500" width="26" height="31" />
      <path d="M604.500 52V225" />
      <path d="M293 305L429 252" />
      <path d={smooth(CURVE_TOP)} />
      <path d={smooth(CURVE_LOW)} />
      <path d="M388.500 302.500h25v-7l24 13-24 13v-7h-25z" strokeWidth="2.500" />
      <g fill="#f58233" stroke="none" fontSize="26" fontWeight="bold" fontFamily="DejaVu Sans Condensed, DejaVu Sans, sans-serif">
        {NUMS.map(([t, x, y]) => <text key={t} x={x} y={y}>{t}</text>)}
      </g>
    </svg>
  );
}

/* ---------- window ---------- */

const BAR = [["&Project", "w-[48px]"], ["&Edit", "w-[32px]"], ["&View", "w-[36px]"], ["&Layer", "w-[41px]"], ["&Settings", "w-[53px]"], ["&Plugins", "w-[47px]"], ["Vect&or", "w-[45px]"], ["&Raster", "w-[46px]"], ["&Database", "w-[60px]"], ["&Web", "w-[36px]"], ["&Mesh", "w-[39px]"], ["Pro&cessing", "w-[65px]"], ["&Help", "w-[40px]"]];

export default function App() {
  return (
    <div className="relative flex h-[1059px] w-[1923px] flex-col overflow-hidden bg-[#d4d0c8] font-['DejaVu_Sans_Condensed','DejaVu_Sans',sans-serif] text-[11px] leading-[14px] tracking-[-0.120px] text-black">
      <div className="flex h-[1031px] shrink-0">
        <div className="flex w-[3px] shrink-0 flex-col">
          <div className="h-[50px] bg-[#333]" />
          <div className="h-[932px] bg-white" />
          <div className="h-[49px] bg-[#333]" />
        </div>
        <div className="flex grow flex-col">
          <div className="flex h-[16px] items-center pl-[6px]">
            {BAR.map(([t, w], i) => (
              <div key={t} className={"flex h-[16px] shrink-0 items-center " + w}>
                <span className={i === 0 ? "bg-[#0a246a] px-[3px] py-px text-white" : "pl-[3px]"}><Mn t={t} /></span>
              </div>
            ))}
          </div>
          <Toolbars />
          <div className="flex">
            <Dock />
            <div className="flex w-[1px]" />
            <MapCanvas />
          </div>
        </div>
      </div>
      <StatusBar />
      <div className="absolute left-[923px] top-[91px] h-[6px] w-[47px] bg-white" />
      <ProjectMenu />
      <TitleDialog />
      <LayoutManager />
      <Callouts />
    </div>
  );
}
